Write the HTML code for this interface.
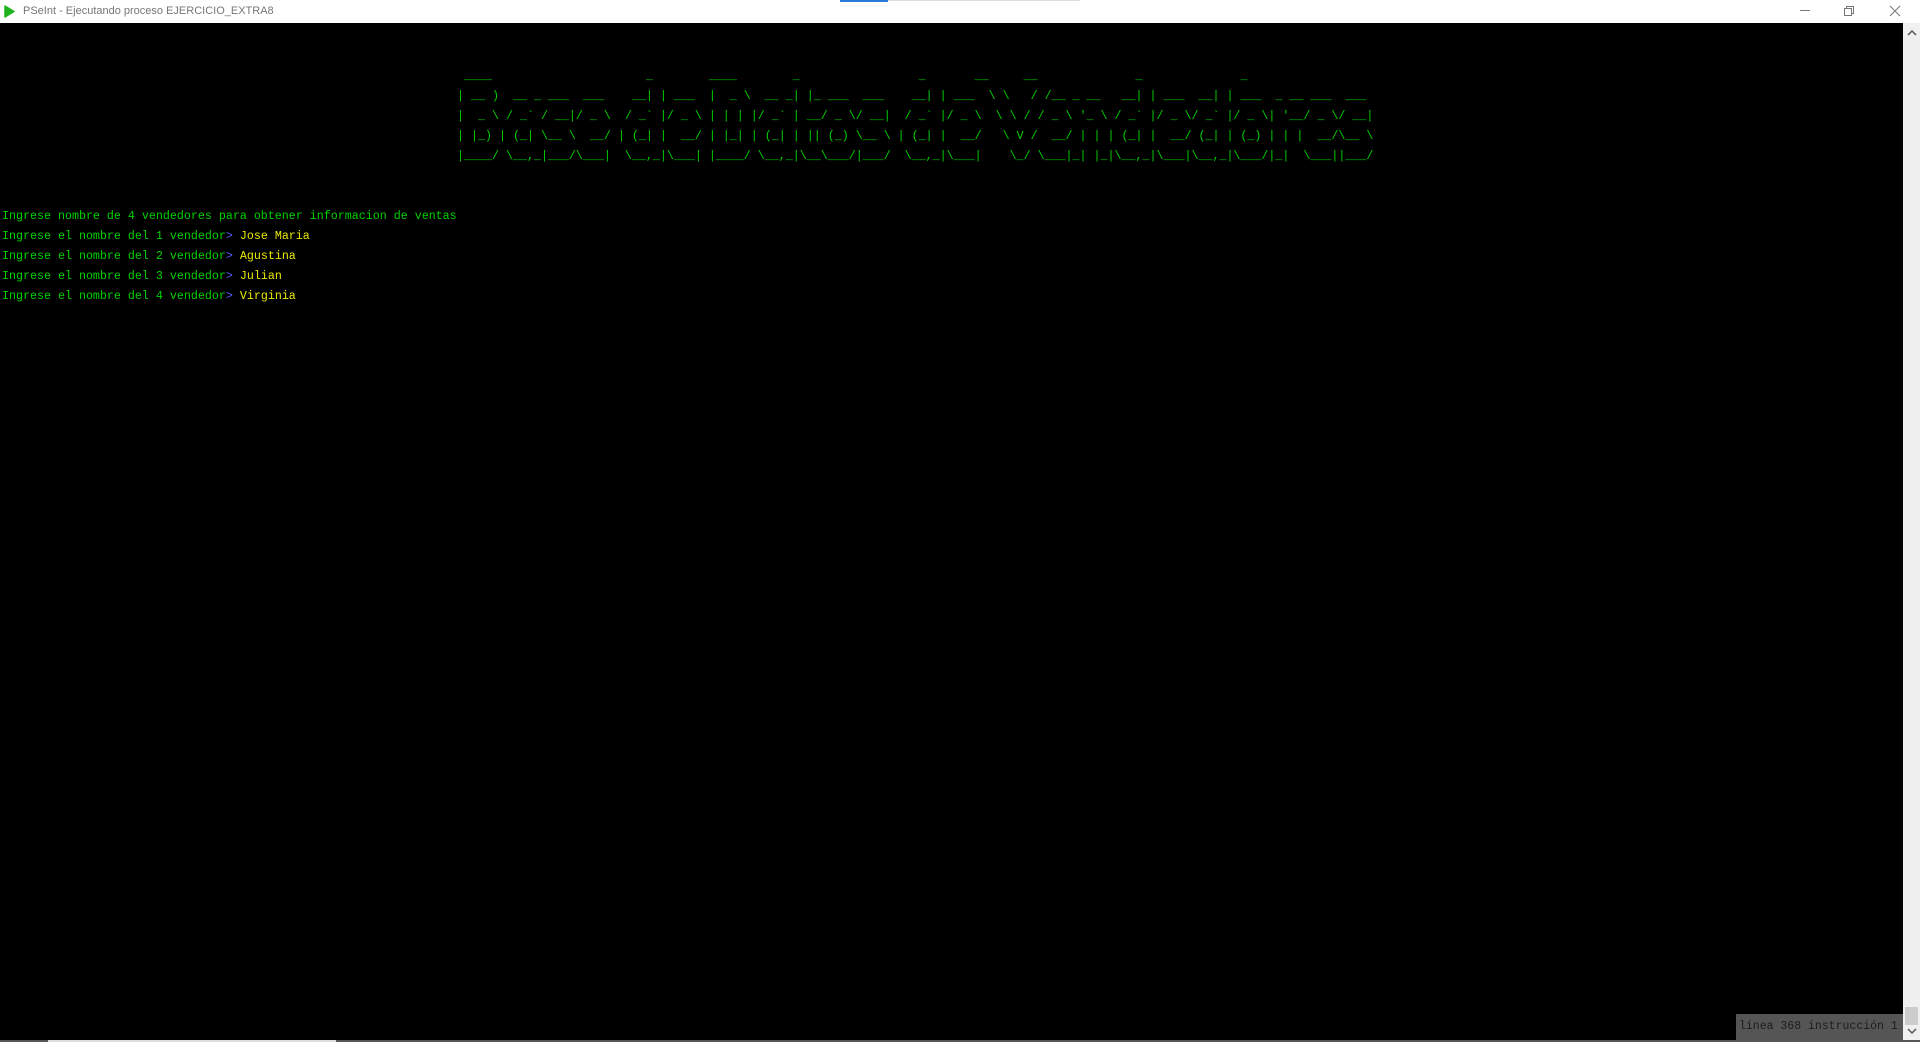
<!DOCTYPE html>
<html><head><meta charset="utf-8"><style>
html,body{margin:0;padding:0;width:1920px;height:1042px;overflow:hidden;background:#000}
#tb{position:absolute;left:0;top:0;width:1920px;height:23px;background:#fff}
#tb .t{position:absolute;left:23px;top:5px;font:11px "Liberation Sans",sans-serif;color:#777}
#tab{position:absolute;left:840px;top:0;width:48px;height:2px;background:#2a7ad8}
#tab2{position:absolute;left:888px;top:0;width:192px;height:1px;background:#ddd}
#main{position:absolute;left:0;top:23px;width:1903px;height:1017px;background:#000}
pre{margin:0;position:absolute;font-family:"Liberation Mono",monospace;font-size:11.67px;line-height:20px;color:#00d200;white-space:pre}
.b{color:#5a5aff}.y{color:#eaea00}
#sb{position:absolute;left:1903px;top:23px;width:17px;height:1017px;background:#f0f0f0}
#thumb{position:absolute;left:1905px;top:1007px;width:13px;height:18px;background:#cdcdcd}
#st{position:absolute;left:1736px;top:1014px;width:167px;height:26px;background:#555;font-family:"Liberation Mono",monospace;font-size:11.5px;line-height:26px;color:#1c1c1c;padding-left:3px;box-sizing:border-box;overflow:hidden;white-space:nowrap}
#bot{position:absolute;left:0;top:1040px;width:1920px;height:2px;background:#555}
#bot2{position:absolute;left:48px;top:1040px;width:288px;height:2px;background:#ddd}
</style></head><body>
<div id="tb">
<svg style="position:absolute;left:4px;top:5px" width="11" height="13" viewBox="0 0 11 13"><path d="M1 1 L10 6.5 L1 12 Z" fill="#1fb31f" stroke="#1fb31f" stroke-linejoin="round" stroke-width="1.5"/></svg>
<div class="t">PSeInt - Ejecutando proceso EJERCICIO_EXTRA8</div>
<div id="tab"></div><div id="tab2"></div>
<svg style="position:absolute;left:1798px;top:4px" width="120" height="16"><line x1="2" y1="6.5" x2="12" y2="6.5" stroke="#777"/><rect x="46.5" y="4.5" width="7" height="7" fill="none" stroke="#777"/><path d="M48.5 4.5V2.5H55.5V9.5H53.5" fill="none" stroke="#777"/><path d="M92 2L102 12M102 2L92 12" stroke="#777"/></svg>
</div>
<div id="main">
<pre style="left:457px;top:43px"> ____                      _        ____        _                 _       __     __              _              _                     
| __ )  __ _ ___  ___    __| | ___  |  _ \  __ _| |_ ___  ___    __| | ___  \ \   / /__ _ __   __| | ___  __| | ___  _ __ ___  ___ 
|  _ \ / _` / __|/ _ \  / _` |/ _ \ | | | |/ _` | __/ _ \/ __|  / _` |/ _ \  \ \ / / _ \ '_ \ / _` |/ _ \/ _` |/ _ \| '__/ _ \/ __|
| |_) | (_| \__ \  __/ | (_| |  __/ | |_| | (_| | || (_) \__ \ | (_| |  __/   \ V /  __/ | | | (_| |  __/ (_| | (_) | | |  __/\__ \
|____/ \__,_|___/\___|  \__,_|\___| |____/ \__,_|\__\___/|___/  \__,_|\___|    \_/ \___|_| |_|\__,_|\___|\__,_|\___/|_|  \___||___/</pre>
<pre style="left:2px;top:183px">Ingrese nombre de 4 vendedores para obtener informacion de ventas
Ingrese el nombre del 1 vendedor<span class="b">&gt;</span> <span class="y">Jose Maria</span>
Ingrese el nombre del 2 vendedor<span class="b">&gt;</span> <span class="y">Agustina</span>
Ingrese el nombre del 3 vendedor<span class="b">&gt;</span> <span class="y">Julian</span>
Ingrese el nombre del 4 vendedor<span class="b">&gt;</span> <span class="y">Virginia</span></pre>
</div>
<div id="sb"><svg style="position:absolute;left:4px;top:6px" width="10" height="8"><path d="M1 6L5 2L9 6" fill="none" stroke="#555" stroke-width="1.5"/></svg>
<svg style="position:absolute;left:4px;top:1004px" width="10" height="8"><path d="M1 2L5 6L9 2" fill="none" stroke="#555" stroke-width="1.5"/></svg></div>
<div id="thumb"></div>
<div id="st">línea 368 instrucción 1</div>
<div id="bot"></div><div id="bot2"></div>
</body></html>
